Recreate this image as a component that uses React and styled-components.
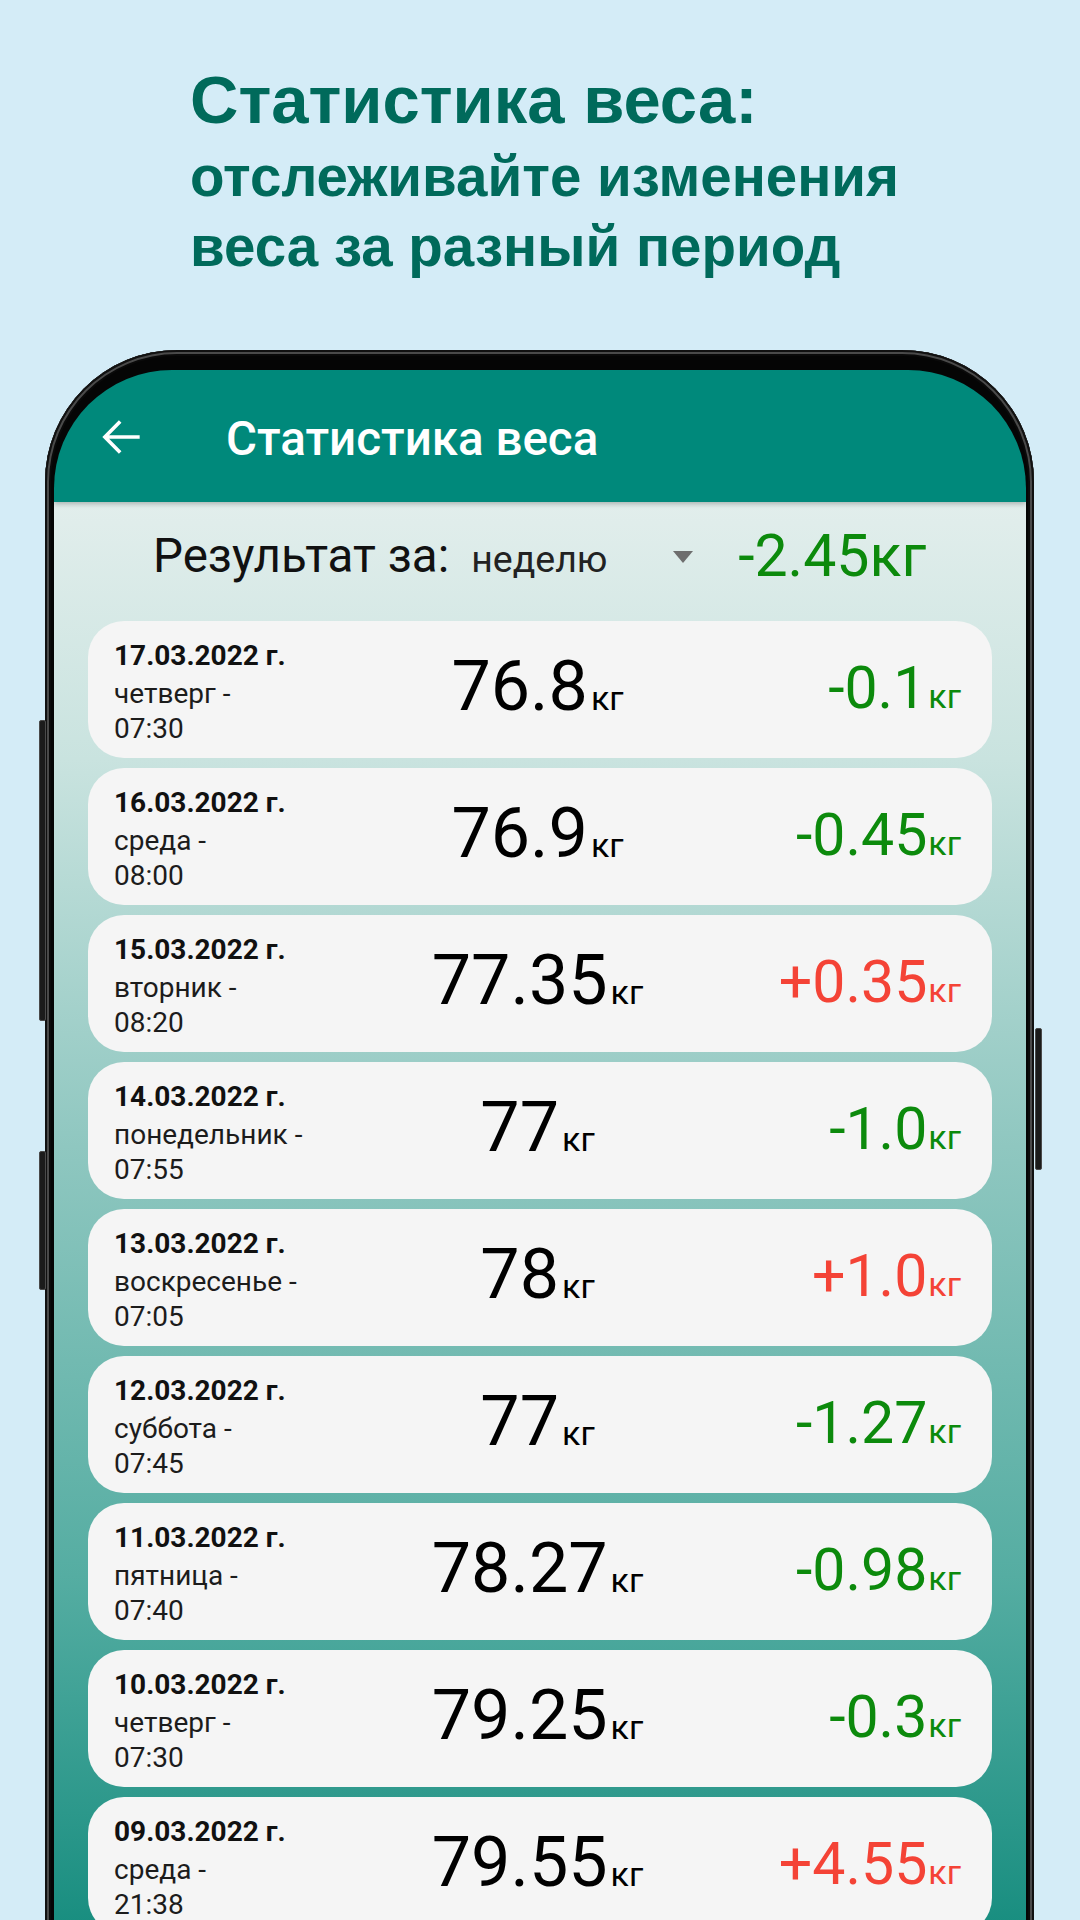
import React from "react";
import styled, { createGlobalStyle } from "styled-components";

const Global = createGlobalStyle`
  html, body { margin: 0; padding: 0; }
  body { background: #d4ecf7; overflow: hidden; }
`;

const Page = styled.div`
  width: 1080px;
  height: 1920px;
  overflow: hidden;
  background: #d4ecf7;
  display: flex;
  flex-direction: column;
`;

const Promo = styled.h1`
  margin: 0;
  padding: 57px 0 0 190px;
  font-family: "Liberation Sans", Arial, sans-serif;
  font-weight: 700;
  color: #006a5b;
`;

const PromoMain = styled.span`
  display: block;
  font-size: 67px;
  line-height: 85px;
`;

const PromoSub = styled.span`
  display: block;
  font-size: 56.5px;
  line-height: 70px;
`;

const Phone = styled.div`
  position: relative;
  margin: 68px 0 0 45px;
  width: 989px;
  box-sizing: border-box;
  padding: 20px 8px 0 9px;
  background: #050505;
  border-radius: 132px 132px 0 0;
  box-shadow: inset 0 0 0 2px #111, inset 0 0 0 4px #4a4a4a, inset 0 0 0 6px #0a0a0a;
  flex: 1;
  display: flex;
  flex-direction: column;
`;

const SideButton = styled.div`
  position: absolute;
  top: ${(p) => p.$top}px;
  height: ${(p) => p.$h}px;
  width: 7px;
  ${(p) => (p.$side === "left" ? "left: -6px;" : "right: -8px;")}
  background: #1b1b1b;
  border: 1px solid #4a4a4a;
  border-radius: 2px;
  box-sizing: border-box;
`;

const Screen = styled.div`
  flex: 1;
  border-radius: 118px 118px 0 0;
  overflow: hidden;
  display: flex;
  flex-direction: column;
  font-family: Roboto, "Noto Sans", sans-serif;
`;

const AppBar = styled.div`
  height: 132px;
  flex: none;
  background: #00897b;
  display: flex;
  align-items: center;
  padding: 2px 0 0 39px;
  box-sizing: border-box;
  box-shadow: 0 2px 5px rgba(0, 0, 0, 0.25);
  position: relative;
  z-index: 1;
`;

const BackIcon = styled.svg`
  width: 56px;
  height: 56px;
  fill: #ffffff;
  flex: none;
`;

const AppTitle = styled.div`
  margin-left: 77px;
  color: #ffffff;
  font-size: 47.5px;
  font-weight: 500;
  line-height: 56px;
  padding-top: 4px;
`;

const Body = styled.div`
  flex: 1;
  background: linear-gradient(
    180deg,
    #e2eeec 0%,
    #c9e3df 18%,
    #8fc7c0 45%,
    #55ada2 75%,
    #178d7f 100%
  );
  display: flex;
  flex-direction: column;
`;

const ResultRow = styled.div`
  height: 108px;
  display: flex;
  align-items: center;
  padding-left: 99px;
  box-sizing: border-box;
`;

const ResultLabel = styled.span`
  font-size: 47.5px;
  line-height: 56px;
  color: #111;
`;

const Select = styled.div`
  margin-left: 22px;
  width: 236px;
  display: flex;
  align-items: center;
  justify-content: space-between;
  padding-top: 6px;
`;

const SelectText = styled.span`
  font-size: 37.5px;
  line-height: 44px;
  color: #222;
`;

const Caret = styled.span`
  width: 0;
  height: 0;
  border-left: 10px solid transparent;
  border-right: 10px solid transparent;
  border-top: 12px solid #6e6e6e;
  margin-right: 14px;
  margin-top: -4px;
`;

const ResultValue = styled.span`
  margin-left: 31px;
  font-size: 59px;
  line-height: 72px;
  color: #0c8a0c;
`;

const List = styled.div`
  display: flex;
  flex-direction: column;
  gap: 10px;
  padding: 11px 34px 0;
`;

const Card = styled.div`
  height: 137px;
  flex: none;
  box-sizing: border-box;
  background: #f5f5f5;
  border-radius: 36px;
  padding: 5px 31px 0 26px;
  display: grid;
  grid-template-columns: 1fr auto 1fr;
  align-items: center;
`;

const DateCol = styled.div`
  display: flex;
  flex-direction: column;
  font-size: 28px;
  line-height: 35px;
  color: #1c1c1c;
  white-space: nowrap;
`;

const DateLine = styled.span`
  font-weight: 700;
  margin-bottom: 3px;
  color: #111;
`;

const Weight = styled.div`
  font-size: 70px;
  line-height: 80px;
  color: #000;
  white-space: nowrap;
`;

const Unit = styled.span`
  font-size: 34px;
  margin-left: ${(p) => p.$gap}px;
`;

const Delta = styled.div`
  justify-self: end;
  font-size: 59px;
  line-height: 70px;
  white-space: nowrap;
  color: ${(p) => (p.$up ? "#f44336" : "#0c8a0c")};
`;

const rows = [
  { date: "17.03.2022 г.", day: "четверг -", time: "07:30", w: "76.8", d: "-0.1", gap: 2 },
  { date: "16.03.2022 г.", day: "среда -", time: "08:00", w: "76.9", d: "-0.45" },
  { date: "15.03.2022 г.", day: "вторник -", time: "08:20", w: "77.35", d: "+0.35" },
  { date: "14.03.2022 г.", day: "понедельник -", time: "07:55", w: "77", d: "-1.0" },
  { date: "13.03.2022 г.", day: "воскресенье -", time: "07:05", w: "78", d: "+1.0" },
  { date: "12.03.2022 г.", day: "суббота -", time: "07:45", w: "77", d: "-1.27" },
  { date: "11.03.2022 г.", day: "пятница -", time: "07:40", w: "78.27", d: "-0.98" },
  { date: "10.03.2022 г.", day: "четверг -", time: "07:30", w: "79.25", d: "-0.3" },
  { date: "09.03.2022 г.", day: "среда -", time: "21:38", w: "79.55", d: "+4.55" },
];

export default function App() {
  return (
    <Page>
      <Global />
      <Promo>
        <PromoMain>Статистика веса:</PromoMain>
        <PromoSub>
          отслеживайте изменения
          <br />
          веса за разный период
        </PromoSub>
      </Promo>
      <Phone>
        <SideButton $side="left" $top={370} $h={301} />
        <SideButton $side="left" $top={801} $h={139} />
        <SideButton $side="right" $top={678} $h={142} />
        <Screen>
          <AppBar>
            <BackIcon viewBox="0 0 24 24">
              <path d="M20 11.2H6.9l5.3-5.3-1.1-1.1L4 12l7.1 7.2 1.1-1.1-5.3-5.3H20z" />
            </BackIcon>
            <AppTitle>Статистика веса</AppTitle>
          </AppBar>
          <Body>
            <ResultRow>
              <ResultLabel>Результат за:</ResultLabel>
              <Select>
                <SelectText>неделю</SelectText>
                <Caret />
              </Select>
              <ResultValue>-2.45кг</ResultValue>
            </ResultRow>
            <List>
              {rows.map((r) => (
                <Card key={r.date}>
                  <DateCol>
                    <DateLine>{r.date}</DateLine>
                    <span>{r.day}</span>
                    <span>{r.time}</span>
                  </DateCol>
                  <Weight>
                    {r.w}
                    <Unit $gap={3}>кг</Unit>
                  </Weight>
                  <Delta $up={r.d.startsWith("+")}>
                    {r.d}
                    <Unit $gap={r.gap || 1}>кг</Unit>
                  </Delta>
                </Card>
              ))}
            </List>
          </Body>
        </Screen>
      </Phone>
    </Page>
  );
}
